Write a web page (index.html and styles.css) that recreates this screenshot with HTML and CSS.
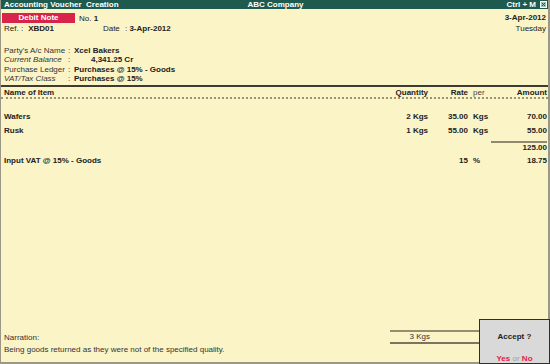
FILE: index.html
```html
<!DOCTYPE html>
<html lang="en">
<head>
  <meta charset="UTF-8">
  <title>Accounting Voucher Creation</title>
  <link rel="stylesheet" href="styles.css">
</head>
<body>
<div class="screen">

  <!-- Title bar -->
  <div class="titlebar">
    <span class="title-left">Accounting Voucher  Creation</span>
    <span class="title-mid">ABC Company</span>
    <span class="title-right">Ctrl + M
      <svg class="close" width="7" height="7" viewBox="0 0 7 7">
        <rect x="0.5" y="0.5" width="6" height="6" fill="#9fc3b8" stroke="#fff"/>
        <path d="M2 2 L5 5 M5 2 L2 5" stroke="#1d5a4d" stroke-width="1"/>
      </svg>
    </span>
  </div>

  <!-- Voucher head -->
  <div class="head">
    <div class="head-left">
      <div class="vrow">
        <span class="badge">Debit Note</span>
        <span class="vno">No. <b>1</b></span>
      </div>
      <div class="vrow ref">
        <span class="ref-label">Ref. :</span>
        <b class="ref-val">XBD01</b>
        <span class="date-label">Date</span>
        <span>: <b>3-Apr-2012</b></span>
      </div>
    </div>
    <div class="head-right">
      <b>3-Apr-2012</b>
      <span>Tuesday</span>
    </div>
  </div>

  <!-- Party details -->
  <div class="party">
    <span>Party's A/c Name</span><span>:</span><b>Xcel Bakers</b>
    <i>Current Balance</i><span>:</span><b class="bal">4,341.25 Cr</b>
    <span>Purchase Ledger</span><span>:</span><b>Purchases @ 15% - Goods</b>
    <i>VAT/Tax Class</i><span>:</span><b>Purchases @ 15%</b>
  </div>

  <!-- Items -->
  <div class="cols colhead">
    <b>Name of Item</b>
    <b class="num">Quantity</b>
    <b class="num">Rate</b>
    <span class="per">per</span>
    <b class="num">Amount</b>
  </div>

  <div class="items">
    <div class="cols first">
      <b>Wafers</b><b class="num">2 Kgs</b><b class="num">35.00</b><b class="per">Kgs</b><b class="num">70.00</b>
    </div>
    <div class="cols">
      <b>Rusk</b><b class="num">1 Kgs</b><b class="num">55.00</b><b class="per">Kgs</b><b class="num">55.00</b>
    </div>
    <div class="cols total">
      <span></span><span></span><span></span><span></span><b class="num sum">125.00</b>
    </div>
    <div class="cols">
      <b>Input VAT @ 15% - Goods</b><span></span><b class="num">15</b><b class="per">%</b><b class="num">18.75</b>
    </div>
  </div>

  <!-- Footer -->
  <div class="footer">
    <div class="narration">
      <span>Narration:</span>
      <span>Being goods returned as they were not of the specified quality.</span>
    </div>
    <div class="qty-total">3 Kgs</div>
    <div class="accept">
      <b>Accept ?</b>
      <div class="yesno"><b>Yes</b> <span>or</span> <b>No</b></div>
    </div>
  </div>

</div>
</body>
</html>
```

FILE: styles.css
```css
body {
    margin: 0;
    font-family: "Liberation Sans", Arial, sans-serif;
    font-size: 8px;
    color: #222;
}
.screen {
    width: 550px;
    height: 364px;
    box-sizing: border-box;
    background-color: #fbf4c7;
    border-left: 1px solid #9a9787;
    border-right: 2px solid #9a9787;
    border-bottom: 2px solid #9a9787;
    display: flex;
    flex-direction: column;
}
.titlebar {
    height: 9px;
    line-height: 9px;
    background-color: #1e5a4e;
    color: white;
    font-weight: bold;
    display: grid;
    grid-template-columns: 1fr auto 1fr;
    padding: 0 1px 0 3px;
}
.title-left {
    white-space: pre;
}
.title-right {
    display: flex;
    justify-content: flex-end;
    align-items: center;
    gap: 4px;
}
.close {
    display: block;
}
.head {
    display: flex;
    justify-content: space-between;
    padding: 4px 2px 0 1px;
}
.vrow {
    display: flex;
    align-items: center;
}
.badge {
    width: 73px;
    height: 10px;
    line-height: 10px;
    background-color: #d8234b;
    color: white;
    font-weight: bold;
    text-align: center;
}
.vno {
    margin-left: 4px;
}
.ref {
    line-height: 9px;
    margin-top: 1px;
    padding-left: 2px;
}
.ref-val {
    margin-left: 5px;
}
.date-label {
    margin-left: 49px;
    width: 22px;
}
.head-right {
    display: flex;
    flex-direction: column;
    align-items: flex-end;
    line-height: 10px;
}
.head-right span {
    margin-top: 1px;
}
.party {
    display: grid;
    grid-template-columns: 64px 6px auto;
    line-height: 9.4px;
    margin-top: 12px;
    padding-left: 3px;
    color: #333;
}
.party b {
    color: #222;
}
.party .bal {
    padding-left: 17px;
}
.cols {
    display: grid;
    grid-template-columns: 1fr 60px 40px 23px 56px;
    line-height: 9px;
    padding: 0 1px 0 3px;
}
.num {
    text-align: right;
}
.per {
    padding-left: 5px;
}
.colhead {
    margin-top: 1px;
    border-top: 2px solid #3e3c30;
    border-bottom: 2px dotted #9b9374;
    padding-top: 1px;
    padding-bottom: 0;
}
.colhead .per {
    color: #444;
}
.items .cols {
    margin-top: 5px;
}
.items .first {
    margin-top: 13.5px;
}
.items .total {
    margin-top: 6px;
}
.items .total + .cols {
    margin-top: 4px;
}
.sum {
    border-top: 2px solid #8f8a70;
}
.footer {
    margin-top: auto;
    display: flex;
    align-items: flex-end;
}
.narration {
    flex: 1;
    display: flex;
    flex-direction: column;
    gap: 3px;
    line-height: 9px;
    padding: 0 0 8px 3px;
    color: #333;
}
.qty-total {
    width: 89px;
    box-sizing: border-box;
    border-top: 2px solid #958d70;
    border-bottom: 2px solid #7b7560;
    line-height: 8px;
    padding: 1px 49px 1px 0;
    text-align: right;
    margin-bottom: 18px;
    color: #333;
}
.accept {
    width: 71px;
    height: 45px;
    box-sizing: border-box;
    margin: 0 -2px -2px 0;
    background-color: #d9d9d9;
    border: 1px solid #2e2e2e;
    display: flex;
    flex-direction: column;
    align-items: center;
    justify-content: space-between;
    padding: 12px 0 0;
    line-height: 9px;
}
.yesno b {
    color: #e0204a;
}
.yesno span {
    color: #a0a0a0;
}
```
